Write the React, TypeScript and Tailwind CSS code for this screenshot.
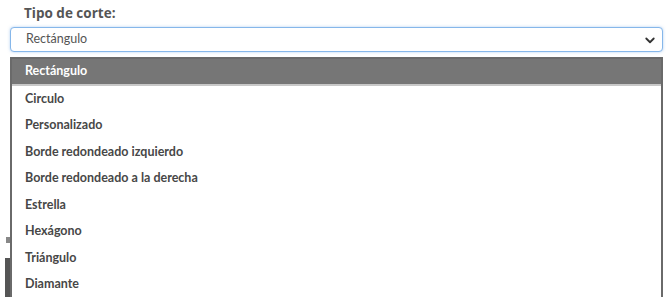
import React from 'react';

const options = [
  'Rectángulo',
  'Circulo',
  'Personalizado',
  'Borde redondeado izquierdo',
  'Borde redondeado a la derecha',
  'Estrella',
  'Hexágono',
  'Triángulo',
  'Diamante',
];

export default function App() {
  return (
    <div
      className="relative w-[670px] h-[297px] overflow-hidden bg-white"
      style={{ fontFamily: 'Lato, "Open Sans", sans-serif' }}
    >
      {/* bits of the page behind the open list */}
      <div className="absolute left-[6px] top-[237px] w-[4px] h-[6px] bg-[#888]" />
      <div className="absolute left-[5px] top-[258px] w-[5px] h-[39px] bg-[#555]" />

      <div className="pl-[10px] pr-[7px] pt-[4px]">
        <label
          className="block pl-[14px] text-[13.5px] font-bold text-[#555] leading-[18px] mb-[5px]"
          style={{ fontFamily: '"Open Sans", sans-serif' }}
        >
          Tipo de corte:
        </label>
        <div className="flex items-center justify-between h-[25px] rounded-[4px] border border-[#86b7ea] shadow-[0_0_3px_rgba(100,160,230,0.5)] bg-white pl-[15px] pr-[6px]">
          <span className="text-[12.5px] text-[#555]">Rectángulo</span>
          <svg width="12" height="12" viewBox="0 0 16 16" className="text-[#333]">
            <path d="M3 6l5 5 5-5" fill="none" stroke="currentColor" strokeWidth="2.4" strokeLinecap="round" strokeLinejoin="round" />
          </svg>
        </div>
        <ul className="mt-[5px] border-x-2 border-t-2 border-[#6a6a6a] bg-white">
          {options.map((o, i) => (
            <li
              key={o}
              className={
                i === 0
                  ? 'h-[27px] flex items-center pl-[13px] bg-[#767676] text-white text-[12.5px] font-bold border-b-2 border-[#c8c8c8]'
                  : 'h-[26.5px] flex items-center pl-[13px] text-[#474747] text-[12.5px] font-bold'
              }
            >
              {o}
            </li>
          ))}
        </ul>
      </div>
    </div>
  );
}
